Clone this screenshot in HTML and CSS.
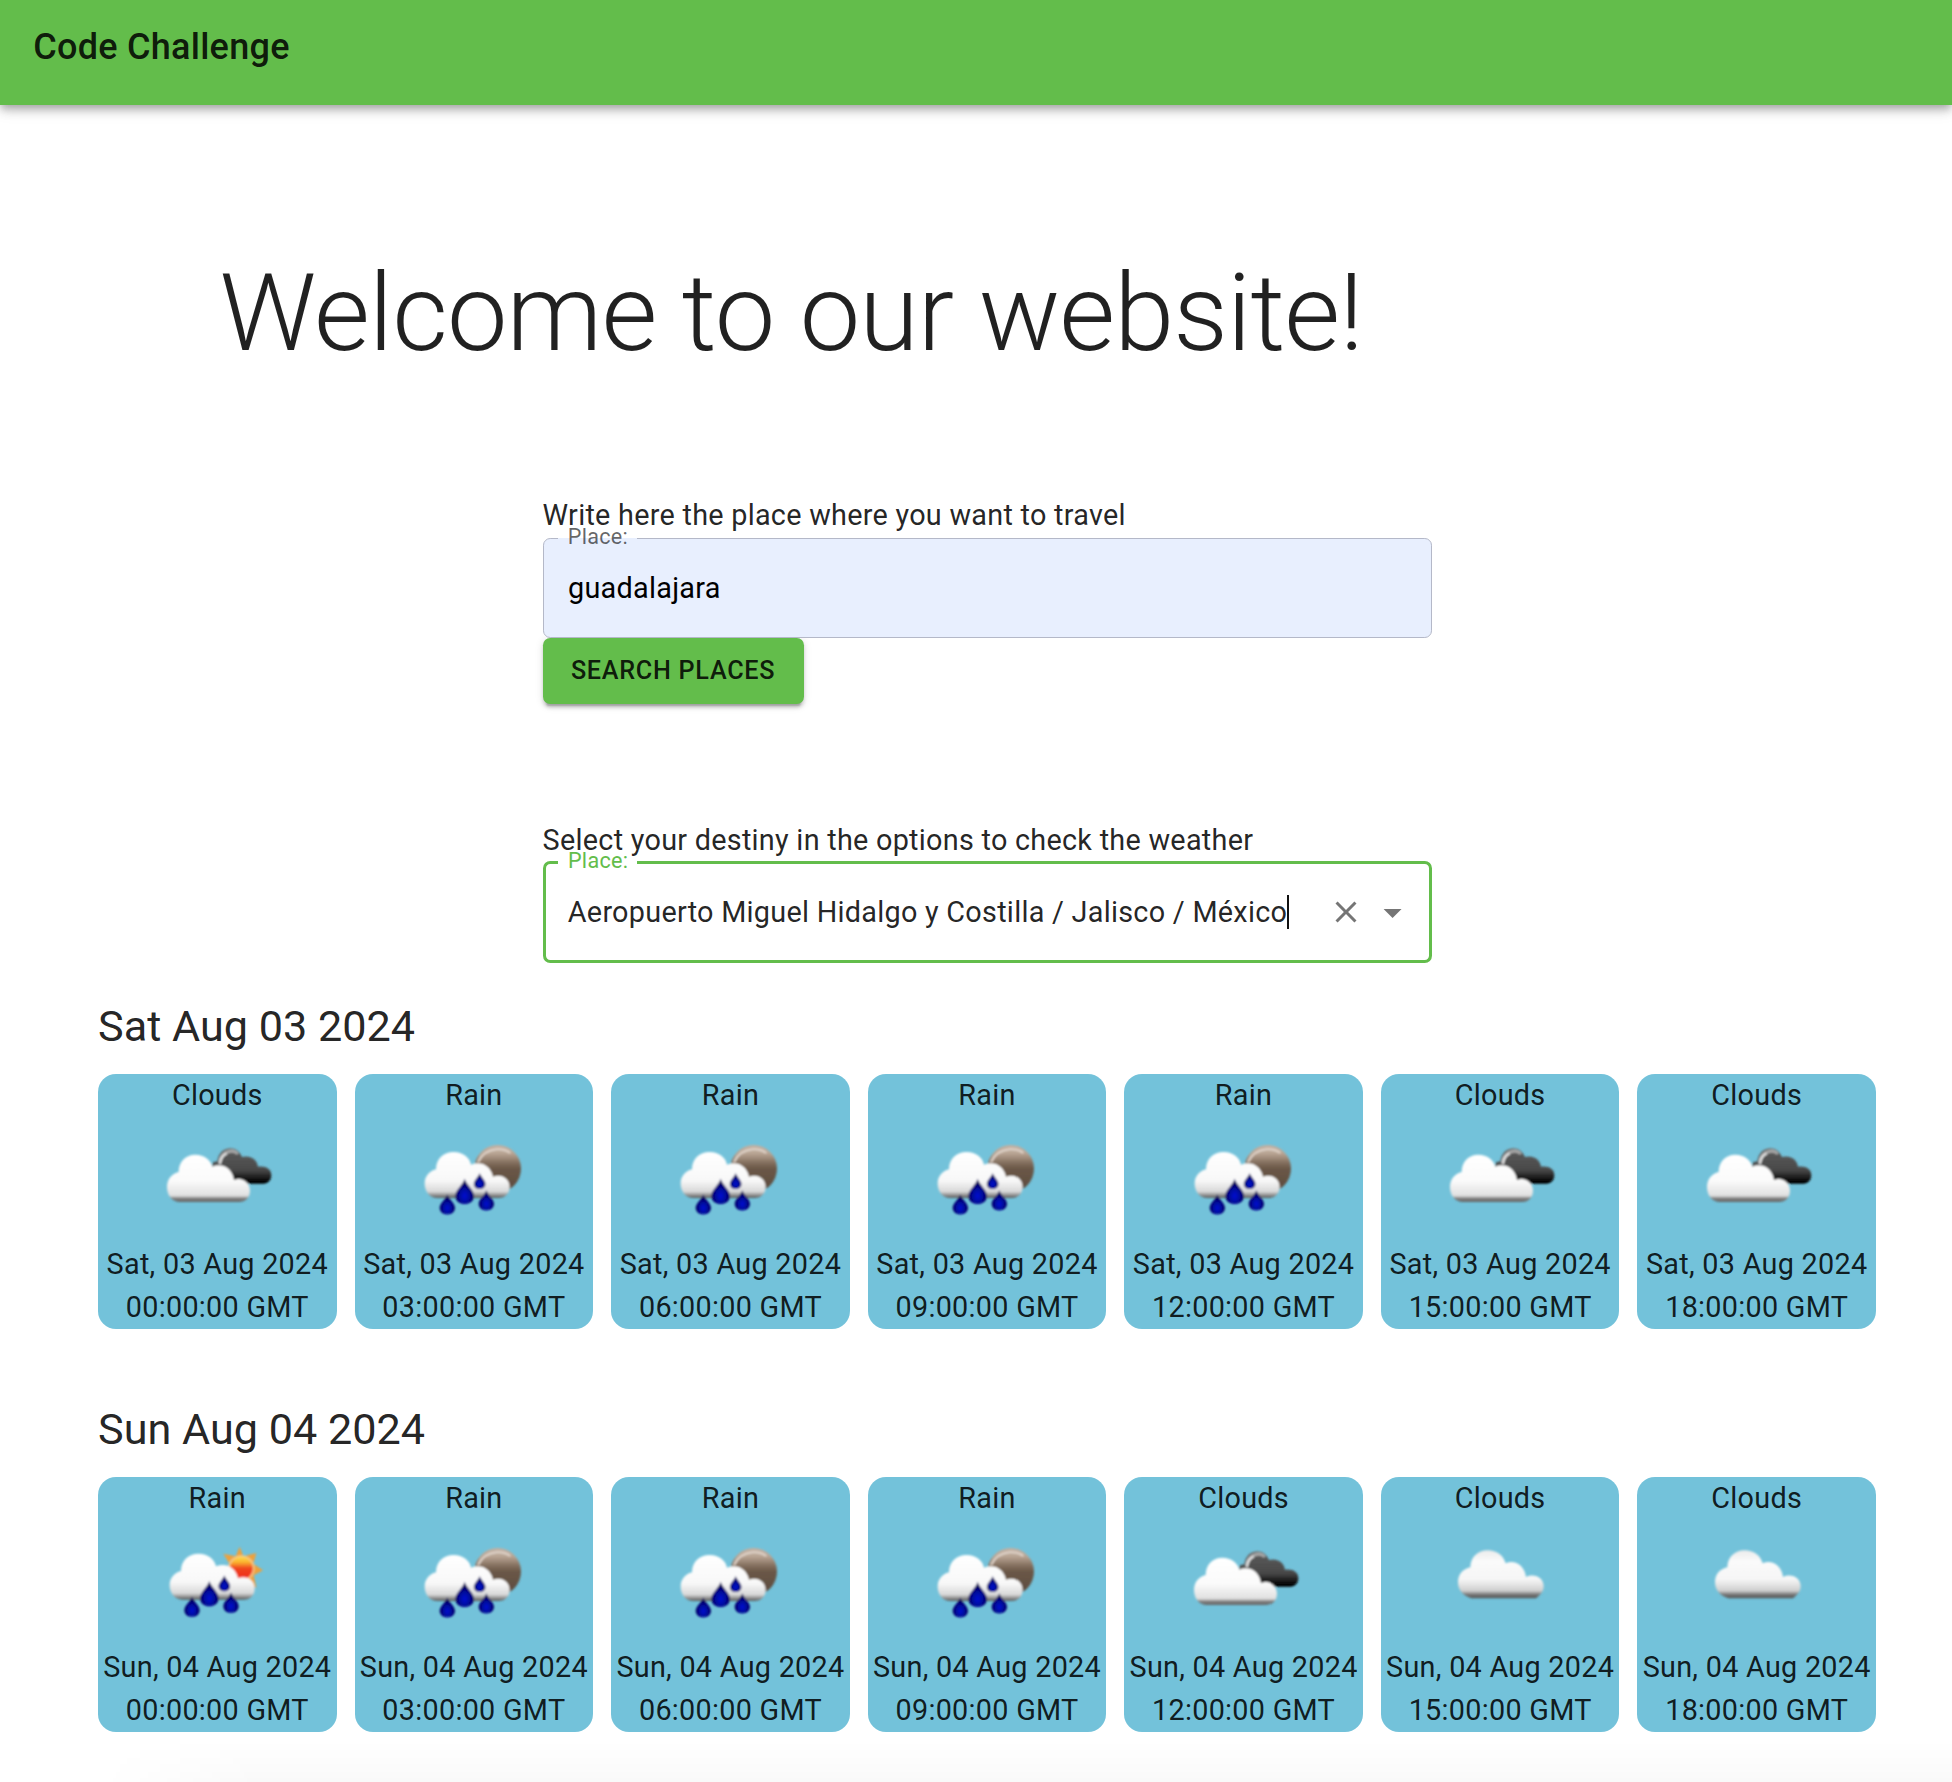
FILE: index.html
```html
<!DOCTYPE html>
<html lang="en">
<head>
<meta charset="utf-8">
<title>Code Challenge</title>
<link rel="stylesheet" href="styles.css">
</head>
<body>
<svg class="sprite" aria-hidden="true">
  <defs>
    <filter id="soft" x="-10%" y="-10%" width="120%" height="120%"><feGaussianBlur stdDeviation="2.5"/></filter>
    <linearGradient id="white" gradientUnits="userSpaceOnUse" x1="0" y1="75" x2="0" y2="220">
      <stop offset="0" stop-color="#fff"/><stop offset=".55" stop-color="#fbfbfb"/><stop offset=".86" stop-color="#e0e0e0"/><stop offset=".92" stop-color="#808080"/><stop offset="1" stop-color="#606060"/>
    </linearGradient>
    <linearGradient id="rainy" gradientUnits="userSpaceOnUse" x1="0" y1="70" x2="0" y2="210">
      <stop offset="0" stop-color="#fff"/><stop offset=".6" stop-color="#f8f8f8"/><stop offset=".84" stop-color="#d8d8d8"/><stop offset="1" stop-color="#444"/>
    </linearGradient>
    <linearGradient id="single" gradientUnits="userSpaceOnUse" x1="0" y1="65" x2="0" y2="208">
      <stop offset="0" stop-color="#ececec"/><stop offset=".22" stop-color="#fafafa"/><stop offset=".6" stop-color="#f6f6f6"/><stop offset=".84" stop-color="#cfcfcf"/><stop offset=".92" stop-color="#777"/><stop offset="1" stop-color="#555"/>
    </linearGradient>
    <linearGradient id="dark" gradientUnits="userSpaceOnUse" x1="0" y1="58" x2="0" y2="165">
      <stop offset="0" stop-color="#777"/><stop offset=".2" stop-color="#555"/><stop offset=".6" stop-color="#4a4a4a"/><stop offset=".95" stop-color="#000"/>
    </linearGradient>
    <linearGradient id="moon" x1="0" y1="0" x2="0" y2="1">
      <stop offset="0" stop-color="#c4b2a4"/><stop offset=".18" stop-color="#b8a493"/><stop offset=".38" stop-color="#826e5d"/><stop offset=".5" stop-color="#6a5747"/><stop offset="1" stop-color="#5c4b3e"/>
    </linearGradient>
    <linearGradient id="sun" x1="0" y1="0" x2="0" y2="1">
      <stop offset="0" stop-color="#ffe14d"/><stop offset=".25" stop-color="#fbb32f"/><stop offset=".5" stop-color="#f0441f"/><stop offset="1" stop-color="#ee2a20"/>
    </linearGradient>
    <radialGradient id="water" cx=".5" cy=".68" r=".5">
      <stop offset="0" stop-color="#0014d2"/><stop offset=".5" stop-color="#0008a0"/><stop offset="1" stop-color="#000058"/>
    </radialGradient>
    <path id="drop" fill="url(#water)" d="M0-38C5-20 28-4 28 13C28 29 15 38 0 38S-28 29-28 13C-28-4-5-20 0-38Z"/>
    <path id="rain-cloud" fill="url(#rainy)" d="M60 164C60 143 73 126 94 121C94 90 116 69 147 69C175 69 196 87 199 107C226 95 258 108 265 143C292 133 315 150 315 174C315 193 302 207 282 207H98C76 207 60 188 60 164Z"/>
    <g id="drops">
      <use href="#drop" transform="translate(180 187)"/>
      <use href="#drop" transform="translate(128 226) scale(.82 .8)"/>
      <use href="#drop" transform="translate(245 214) scale(.82 .8)"/>
      <use href="#drop" transform="translate(225 156) scale(.62 .63)"/>
    </g>
  </defs>
  <symbol id="clouds" viewBox="0 0 420 300">
    <g transform="translate(8 6)" filter="url(#soft)">
      <path fill="url(#dark)" d="M187 112L190 100L203 97C206 74 221 58 242 58C258 58 270 68 277 84C298 78 321 87 325 113C348 110 365 120 365 139C365 154 355 164 341 164H220Z"/>
      <path d="M209 101C211 84 222 70 240 67C249 65 259 68 264 75" fill="none" stroke="#aaa" stroke-width="8"/>
      <path d="M211 105C213 88 221 78 231 74" fill="none" stroke="#eee" stroke-width="6"/>
      <path fill="url(#white)" d="M52 174C52 151 66 134 87 129C87 97 108 77 137 77C164 77 183 92 188 113C218 100 249 119 253 153C278 143 301 161 301 185C301 205 288 219 268 219H91C67 219 52 199 52 174Z"/>
    </g>
  </symbol>
  <symbol id="night-rain" viewBox="0 0 420 300">
    <g transform="translate(2 6)" filter="url(#soft)">
      <ellipse cx="279" cy="119" rx="70" ry="71" fill="url(#moon)"/>
      <path d="M220 99C231 76 251 63 276 61C293 60 307 64 317 72" fill="none" stroke="#e0d4ca" stroke-width="6"/>
      <use href="#rain-cloud"/>
      <use href="#drops"/>
    </g>
  </symbol>
  <symbol id="day-rain" viewBox="0 0 420 300">
    <g transform="translate(8 -3)" filter="url(#soft)">
      <path fill="#eda13c" d="M270 53L281 82L320 72L311 104L340 124L312 139L320 176L285 164L235 125L238 102L221 74L258 82Z"/>
      <circle cx="275" cy="118" r="37" fill="url(#sun)" stroke="#f7c98a" stroke-width="5"/>
      <use href="#rain-cloud" transform="translate(0 5)"/>
      <use href="#drops" transform="translate(-1 7)"/>
    </g>
  </symbol>
  <symbol id="cloud" viewBox="0 0 420 300">
    <g transform="translate(0 -3)" filter="url(#soft)">
      <path fill="url(#single)" d="M84 159C84 136 99 120 121 115C122 84 143 64 173 64C200 64 220 79 227 103C254 91 284 109 288 144C315 132 341 147 341 172C341 186 334 195 318 208H124C96 199 84 181 84 159Z"/>
    </g>
  </symbol>
</svg>

<header class="app-bar"><div class="app-title">Code Challenge</div></header>

<main class="page">
  <h1 class="welcome">Welcome to our website!</h1>

  <section class="form-block search">
    <p class="hint">Write here the place where you want to travel</p>
    <div class="field filled"><span class="field-label">Place:</span><span class="value">guadalajara</span></div>
    <button class="button" type="button">SEARCH PLACES</button>
  </section>

  <section class="form-block select">
    <p class="hint">Select your destiny in the options to check the weather</p>
    <div class="field focused">
      <span class="field-label">Place:</span>
      <span class="value">Aeropuerto Miguel Hidalgo y Costilla / Jalisco / México</span><span class="caret"></span>
      <span class="controls">
        <svg class="clear" viewBox="0 0 24 24"><path d="M19 6.41L17.59 5 12 10.59 6.41 5 5 6.41 10.59 12 5 17.59 6.41 19 12 13.41 17.59 19 19 17.59 13.41 12z"/></svg>
        <svg class="arrow" viewBox="0 0 24 24"><path d="M7 10l5 5 5-5z"/></svg>
      </span>
    </div>
  </section>

  <section class="day">
    <h2 class="day-title">Sat Aug 03 2024</h2>
    <div class="cards">
      <article class="card"><p>Clouds</p><svg class="weather"><use href="#clouds"/></svg><p>Sat, 03 Aug 2024<br>00:00:00 GMT</p></article>
      <article class="card"><p>Rain</p><svg class="weather"><use href="#night-rain"/></svg><p>Sat, 03 Aug 2024<br>03:00:00 GMT</p></article>
      <article class="card"><p>Rain</p><svg class="weather"><use href="#night-rain"/></svg><p>Sat, 03 Aug 2024<br>06:00:00 GMT</p></article>
      <article class="card"><p>Rain</p><svg class="weather"><use href="#night-rain"/></svg><p>Sat, 03 Aug 2024<br>09:00:00 GMT</p></article>
      <article class="card"><p>Rain</p><svg class="weather"><use href="#night-rain"/></svg><p>Sat, 03 Aug 2024<br>12:00:00 GMT</p></article>
      <article class="card"><p>Clouds</p><svg class="weather"><use href="#clouds"/></svg><p>Sat, 03 Aug 2024<br>15:00:00 GMT</p></article>
      <article class="card"><p>Clouds</p><svg class="weather"><use href="#clouds"/></svg><p>Sat, 03 Aug 2024<br>18:00:00 GMT</p></article>
    </div>
  </section>

  <section class="day">
    <h2 class="day-title">Sun Aug 04 2024</h2>
    <div class="cards">
      <article class="card"><p>Rain</p><svg class="weather"><use href="#day-rain"/></svg><p>Sun, 04 Aug 2024<br>00:00:00 GMT</p></article>
      <article class="card"><p>Rain</p><svg class="weather"><use href="#night-rain"/></svg><p>Sun, 04 Aug 2024<br>03:00:00 GMT</p></article>
      <article class="card"><p>Rain</p><svg class="weather"><use href="#night-rain"/></svg><p>Sun, 04 Aug 2024<br>06:00:00 GMT</p></article>
      <article class="card"><p>Rain</p><svg class="weather"><use href="#night-rain"/></svg><p>Sun, 04 Aug 2024<br>09:00:00 GMT</p></article>
      <article class="card"><p>Clouds</p><svg class="weather"><use href="#clouds"/></svg><p>Sun, 04 Aug 2024<br>12:00:00 GMT</p></article>
      <article class="card"><p>Clouds</p><svg class="weather"><use href="#cloud"/></svg><p>Sun, 04 Aug 2024<br>15:00:00 GMT</p></article>
      <article class="card"><p>Clouds</p><svg class="weather"><use href="#cloud"/></svg><p>Sun, 04 Aug 2024<br>18:00:00 GMT</p></article>
    </div>
  </section>
</main>
<div class="bottom-shade"></div>
</body>
</html>
```
FILE: styles.css
```css
* { box-sizing: border-box; }

body {
  margin: 0;
  height: 1782px;
  overflow: hidden;
  background: #fff;
  color: rgba(0, 0, 0, .87);
  font: 400 28.8px/43.2px Roboto, "Liberation Sans", sans-serif;
  letter-spacing: .00938em;
}

h1, h2, p { margin: 0; font-weight: 400; }

.sprite { position: absolute; width: 0; height: 0; }

.app-bar {
  height: 105px;
  padding: 19px 33.2px;
  background: #63bd4b;
  box-shadow: 0 3.6px 7.2px -1.8px rgba(0, 0, 0, .2), 0 7.2px 9px rgba(0, 0, 0, .14), 0 1.8px 18px rgba(0, 0, 0, .12);
}

.app-title {
  font-size: 36px;
  line-height: 57.6px;
  font-weight: 500;
  letter-spacing: .0075em;
}

.page { padding: 144.3px 76px 0 98px; }

.welcome {
  margin-left: 121.6px;
  font-size: 108px;
  line-height: 129.6px;
  font-weight: 300;
  letter-spacing: -.00833em;
}

.form-block { width: 889px; margin-left: 444.6px; }
.search { margin-top: 115.5px; height: 209.4px; }
.select { margin-top: 115px; height: 144px; }

.field {
  position: relative;
  display: flex;
  align-items: center;
  height: 100px;
  padding: 2px 25.2px 0 24.4px;
  border: 1px solid #b4b8c8;
  border-radius: 7.2px;
}

.filled { background: #e8effe; color: #000; }
.focused { height: 102px; margin-top: -1px; border: 3px solid #63bd4b; padding: 1px 14px 0 22.2px; }

.field-label {
  position: absolute;
  left: 14px;
  top: -15px;
  padding: 0 9px 0 10.2px;
  font-size: 21.6px;
  line-height: 26px;
  color: rgba(0, 0, 0, .6);
}

.filled .field-label { background: linear-gradient(transparent 14px, #e8effe 14px); }
.focused .field-label { left: 12.2px; top: -16px; color: #63bd4b; background: linear-gradient(transparent 13px, #fff 13px); }

.caret { width: 2px; height: 34px; background: #111; }

.controls { display: flex; align-items: center; gap: 7.2px; margin-left: auto; fill: #757575; }
.clear { width: 36px; height: 36px; }
.arrow { width: 43.2px; height: 43.2px; }

.button {
  display: block;
  height: 66px;
  padding: 10.8px 28.3px;
  border: 0;
  border-radius: 7.2px;
  background: #63bd4b;
  color: rgba(0, 0, 0, .87);
  font: 500 25.2px/44.1px Roboto, "Liberation Sans", sans-serif;
  letter-spacing: .02857em;
  box-shadow: 0 5.4px 1.8px -3.6px rgba(0, 0, 0, .2), 0 3.6px 3.6px rgba(0, 0, 0, .14), 0 1.8px 9px rgba(0, 0, 0, .12);
}

.day { height: 403px; }
.select + .day { margin-top: 35.2px; }

.day-title {
  font-size: 43.2px;
  line-height: 57.6px;
  letter-spacing: 0;
  margin-bottom: 18px;
}

.cards { display: grid; grid-template-columns: repeat(7, 1fr); gap: 18px; }

.card {
  height: 255.4px;
  border-radius: 18px;
  background: #73c2da;
  text-align: center;
  white-space: nowrap;
}

.weather { display: block; width: 140px; height: 100px; margin: 9.8px auto 16.6px; }

/* faint shade rising from the bottom edge of the window */
.bottom-shade {
  position: absolute;
  left: 0;
  right: 0;
  bottom: 0;
  height: 42px;
  background: linear-gradient(rgba(0, 0, 0, 0), rgba(0, 0, 0, .024));
  -webkit-mask-image: linear-gradient(90deg, transparent 100px, #000 260px);
  mask-image: linear-gradient(90deg, transparent 100px, #000 260px);
}
```
